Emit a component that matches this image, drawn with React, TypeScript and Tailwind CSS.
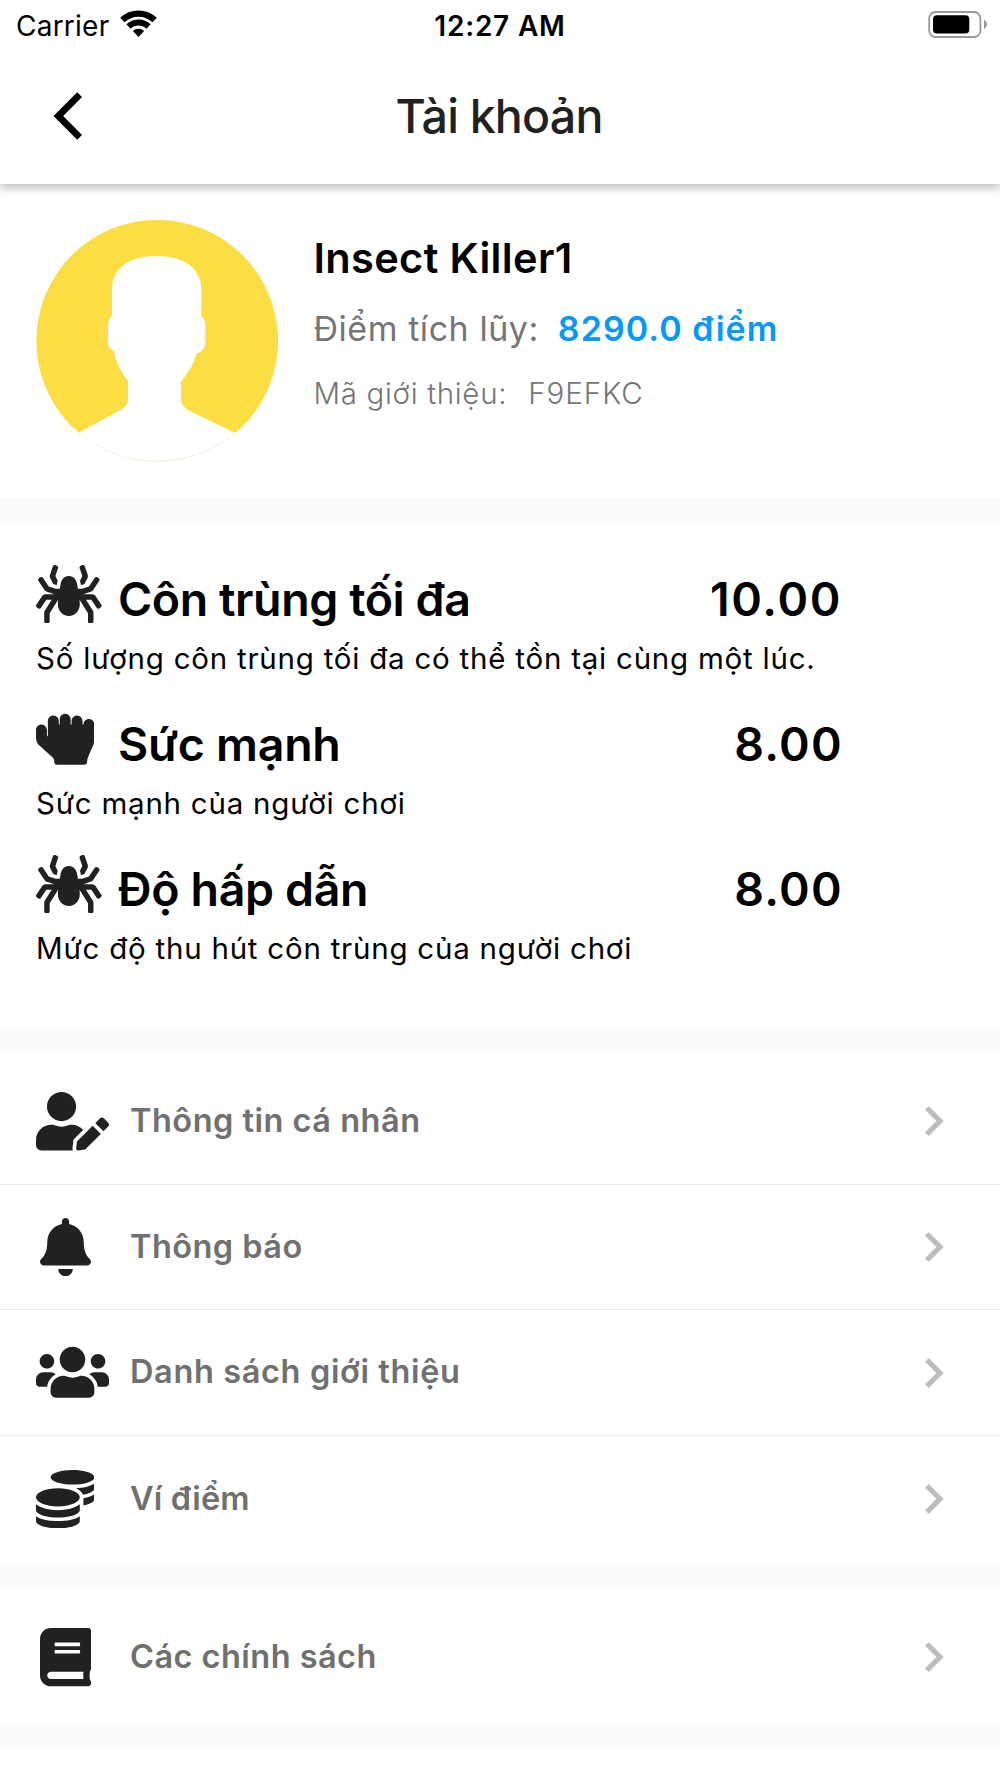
import type { IconType } from "react-icons";
import {
  FaBell,
  FaBook,
  FaCoins,
  FaHandRock,
  FaSpider,
  FaUserEdit,
  FaUsers,
} from "react-icons/fa";

type Stat = {
  icon: IconType;
  iconClass: string;
  title: string;
  titleClass: string;
  value: string;
  valueClass: string;
  description: string;
};

type MenuEntry = {
  icon: IconType;
  iconClass: string;
  label: string;
  labelClass: string;
};

const stats: Stat[] = [
  {
    icon: FaSpider,
    iconClass: "w-[65.7px]",
    title: "Côn trùng tối đa",
    titleClass: "tracking-[-0.42px]",
    value: "10.00",
    valueClass: "mr-px tracking-[1.6px]",
    description: "Số lượng côn trùng tối đa có thể tồn tại cùng một lúc.",
  },
  {
    icon: FaHandRock,
    iconClass: "w-[58.4px]",
    title: "Sức mạnh",
    titleClass: "tracking-[-0.25px]",
    value: "8.00",
    valueClass: "tracking-[1.3px]",
    description: "Sức mạnh của người chơi",
  },
  {
    icon: FaSpider,
    iconClass: "w-[65.7px]",
    title: "Độ hấp dẫn",
    titleClass: "tracking-[-0.36px]",
    value: "8.00",
    valueClass: "tracking-[1.3px]",
    description: "Mức độ thu hút côn trùng của người chơi",
  },
];

const accountMenu: MenuEntry[] = [
  {
    icon: FaUserEdit,
    iconClass: "w-[73px]",
    label: "Thông tin cá nhân",
    labelClass: "tracking-[0.5px]",
  },
  {
    icon: FaBell,
    iconClass: "ml-[3.7px] w-[51px]",
    label: "Thông báo",
    labelClass: "tracking-[0.46px]",
  },
  {
    icon: FaUsers,
    iconClass: "w-[73px]",
    label: "Danh sách giới thiệu",
    labelClass: "tracking-[0.63px]",
  },
  {
    icon: FaCoins,
    iconClass: "w-[58.4px]",
    label: "Ví điểm",
    labelClass: "tracking-[0.15px]",
  },
];

const policyMenu: MenuEntry[] = [
  {
    icon: FaBook,
    iconClass: "ml-[3.7px] w-[51px]",
    label: "Các chính sách",
    labelClass: "tracking-[0.46px]",
  },
];

function StatusBar() {
  return (
    <div className="grid h-[51px] grid-cols-3 items-center pr-[13px] pl-4 text-[28px] leading-none text-black">
      <div className="flex items-center gap-[11px]">
        <span className="tracking-[0.24px]">Carrier</span>
        <svg width="37" height="27" viewBox="0 0 37 27" className="-mt-1">
          <g fill="none" stroke="currentColor" strokeWidth="6.2">
            <path d="M2.35 10.06A23.4 23.4 0 0 1 34.65 10.06" />
            <path d="M8.5 16.5A14.5 14.5 0 0 1 28.5 16.5" />
          </g>
          <path d="M18.5 27L12.84 21.06A8.2 8.2 0 0 1 24.16 21.06Z" fill="currentColor" />
        </svg>
      </div>
      <span className="-ml-[3px] text-center font-semibold tracking-[0.8px]">
        12:27 AM
      </span>
      <svg
        width="59"
        height="27"
        viewBox="0 0 59 27"
        className="-mt-[3px] justify-self-end"
      >
        <rect x="1.2" y="1" width="51.2" height="25" rx="6.5" fill="none" stroke="#999" strokeWidth="1.8" />
        <rect x="5" y="4.3" width="36.3" height="18.2" rx="4" fill="#000" />
        <path d="M56 8.6Q59 10.5 59 13.3T56 18.2Z" fill="#999" />
      </svg>
    </div>
  );
}

function Header() {
  return (
    <header className="relative z-10 h-[184px] bg-white shadow-[0_3px_10px_rgba(0,0,0,0.3)]">
      <StatusBar />
      <div className="grid h-[130px] grid-cols-[1fr_auto_1fr] items-center px-[53px]">
        <svg
          width="30"
          height="48"
          viewBox="0 0 30 48"
          fill="none"
          stroke="#000"
          strokeWidth="6.8"
        >
          <path d="M26.6 2.7L5.3 24L26.6 45.3" />
        </svg>
        <h1 className="-ml-[2px] text-[46.5px] leading-none font-medium tracking-[-0.8px] text-[#212121]">
          Tài khoản
        </h1>
      </div>
    </header>
  );
}

function Avatar() {
  return (
    <svg width="242" height="242" viewBox="0 0 242 242" className="shrink-0">
      <defs>
        <clipPath id="avatar-clip">
          <circle cx="121.2" cy="120.8" r="120.9" />
        </clipPath>
      </defs>
      <g clipPath="url(#avatar-clip)">
        <rect width="242" height="242" fill="#fbde44" />
        <path
          d="M120.7 36C146 36 165.3 47 165.3 69.3V96.7C168 98.5 169.3 101.5 169.3 105V122.7C169.3 128 166 132 160.8 133.3C157.5 144 152 153.5 145 161.7V179C145.5 184 148.5 188.3 153.3 190.7L198.7 212.7L242 260H0L43.3 212.3L84.7 190C89.5 187 92 184 92 179.3V161C85.5 152.5 80.2 142.5 77.7 131C73.8 129 72 126 72 122.7V105C72 101 73.5 98 76 96V69.3C76 47 95 36 120.7 36Z"
          fill="#fff"
        />
      </g>
      <path
        d="M43.3 212.7A120.6 120.6 0 0 0 198.7 212.7"
        fill="none"
        stroke="#eef2f3"
        strokeWidth="0.8"
      />
    </svg>
  );
}

function Profile() {
  return (
    <section className="flex h-[314px] gap-[35.5px] px-9 pt-9 whitespace-nowrap">
      <Avatar />
      <div>
        <h2 className="text-[41.5px] leading-[76px] font-semibold tracking-[0.35px] text-black">
          Insect Killer1
        </h2>
        <p className="flex gap-[19px] text-[34px] leading-[65px]">
          <span className="tracking-[0.55px] text-[#757575]">
            Điểm tích lũy:
          </span>
          <span className="font-semibold tracking-[1.05px] text-[#0598f6]">
            8290.0 điểm
          </span>
        </p>
        <p className="flex gap-[21px] text-[29.5px] leading-[64px] font-light text-[#757575]">
          <span className="tracking-[0.68px]">Mã giới thiệu:</span>
          <span className="tracking-[0.98px]">F9EFKC</span>
        </p>
      </div>
    </section>
  );
}

function StatRow({ stat }: { stat: Stat }) {
  const Icon = stat.icon;
  return (
    <li className="h-[145px] whitespace-nowrap text-black">
      <div className="flex h-[70px] text-[46.5px] leading-[70px] font-semibold">
        <div className="w-[82px] shrink-0 pt-[0.5px]">
          <Icon className={`h-[58.4px] text-[#212121] ${stat.iconClass}`} />
        </div>
        <h3 className={`flex-1 ${stat.titleClass}`}>{stat.title}</h3>
        <span className={stat.valueClass}>{stat.value}</span>
      </div>
      <p className="text-[29.5px] leading-[48px] tracking-[0.77px]">
        {stat.description}
      </p>
    </li>
  );
}

function MenuRow({ entry }: { entry: MenuEntry }) {
  const Icon = entry.icon;
  return (
    <li className="flex h-[125.67px] items-center pr-[56px] pl-9">
      <div className="w-[94px] shrink-0">
        <Icon className={`h-[58.4px] text-[#212121] ${entry.iconClass}`} />
      </div>
      <span
        className={`flex-1 text-[32.5px] leading-none font-semibold text-[#707070] ${entry.labelClass}`}
      >
        {entry.label}
      </span>
      <svg
        width="19"
        height="30"
        viewBox="0 0 19 30"
        fill="none"
        stroke="#bdbdbd"
        strokeWidth="5.2"
      >
        <path d="M1.9 1.9L15 15L1.9 28.1" />
      </svg>
    </li>
  );
}

function Band() {
  return <div className="h-6 bg-[#fafafa]" />;
}

export default function App() {
  return (
    <main className="h-[1778px] w-[1000px] overflow-hidden bg-white font-['Inter',sans-serif]">
      <Header />
      <Profile />
      <Band />
      <ul className="h-[507px] pt-[42px] pr-[157px] pl-9">
        {stats.map((stat) => (
          <StatRow key={stat.title} stat={stat} />
        ))}
      </ul>
      <Band />
      <ul className="h-[512px] divide-y-[1.5px] divide-[#ebebeb] pt-[6px]">
        {accountMenu.map((entry) => (
          <MenuRow key={entry.label} entry={entry} />
        ))}
      </ul>
      <Band />
      <ul className="h-[136px] pt-[5.6px]">
        {policyMenu.map((entry) => (
          <MenuRow key={entry.label} entry={entry} />
        ))}
      </ul>
      <Band />
    </main>
  );
}
